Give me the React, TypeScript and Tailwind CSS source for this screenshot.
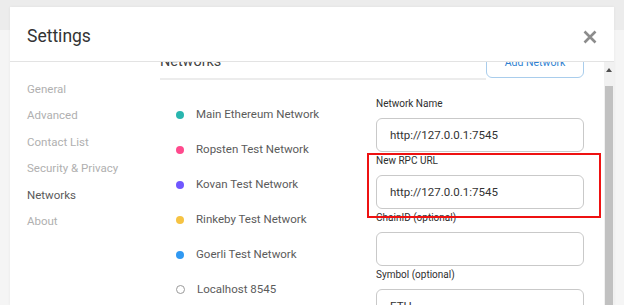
import { useState } from "react";

const networks = [
  { name: "Main Ethereum Network", dot: "bg-[#29b6af]" },
  { name: "Ropsten Test Network", dot: "bg-[#ff4a8d]" },
  { name: "Kovan Test Network", dot: "bg-[#7057ff]" },
  { name: "Rinkeby Test Network", dot: "bg-[#f6c343]" },
  { name: "Goerli Test Network", dot: "bg-[#3099f2]" },
  { name: "Localhost 8545", dot: "" },
];

const tabs = ["General", "Advanced", "Contact List", "Security & Privacy", "Networks", "About"];

function Field({ label, value }: { label: string; value: string }) {
  return (
    <div className="flex flex-col mb-[2px]">
      <label className="text-[10px] leading-[14px] text-[#2f2f2f] mb-[7px]">{label}</label>
      <input
        readOnly
        value={value}
        className="h-[34px] w-full border border-[#c9c9c9] rounded-[6px] px-[13px] text-[11.5px] text-[#333] bg-white outline-none"
      />
    </div>
  );
}

export default function App() {
  const [active] = useState("Networks");

  return (
    <div className="w-[624px] h-[305px] overflow-hidden bg-[linear-gradient(#ececec_0_30px,#f5f5f5_30px)] font-['Roboto',sans-serif]">
      <div className="ml-[10px] mt-[7px] w-[604px] h-[298px] bg-white flex flex-col shadow-[0_0_3px_rgba(0,0,0,0.06)]">
        {/* header */}
        <div className="h-[55px] shrink-0 flex items-center justify-between pl-[17px] pr-[17px] pt-[4px] border-b border-[#e3e3e3] relative z-10 bg-white">
          <h1 className="text-[17.5px] text-[#333]">Settings</h1>
          <svg width="14" height="14" viewBox="0 0 14 14" className="mt-[1px]">
            <path d="M1.5 1.5 L12.5 12.5 M12.5 1.5 L1.5 12.5" stroke="#8c8c8c" strokeWidth="2.6" strokeLinecap="butt" />
          </svg>
        </div>

        {/* body */}
        <div className="flex flex-1 min-h-0">
          {/* sidebar */}
          <div className="w-[150px] shrink-0 pl-[17px] pt-[14px]">
            {tabs.map((t) => (
              <div
                key={t}
                className={`text-[11.5px] leading-[26.4px] ${t === active ? "text-[#5a5a5a]" : "text-[#b0b0b0]"}`}
              >
                {t}
              </div>
            ))}
          </div>

          {/* main */}
          <div className="flex-1 min-w-0 overflow-hidden">
            <div className="-mt-[14px]">
              <div className="h-[32px] flex pr-[20px]">
                <div className="flex-1 flex items-end pb-[6px] border-b-2 border-[#ececec]">
                  <h2 className="text-[14.4px] leading-[20px] text-[#444]">Networks</h2>
                </div>
                <button className="h-[30px] w-[98px] border border-[#a9cdec] rounded-[6px] text-[10.5px] text-[#2f7fd0] bg-white">
                  Add Network
                </button>
              </div>

              <div className="flex pr-[20px]">
                <div className="w-[216px] shrink-0 pl-[16px] pt-[17px]">
                  {networks.map((n) => (
                    <div key={n.name} className="h-[35px] flex items-center">
                      {n.dot ? (
                        <span className={`w-[8px] h-[8px] rounded-full ${n.dot}`} />
                      ) : (
                        <span className="w-[9px] h-[9px] rounded-full border-[1.5px] border-[#9a9a9a]" />
                      )}
                      <span className="ml-[12px] text-[11.5px] text-[#5b5b5b]">{n.name}</span>
                    </div>
                  ))}
                </div>

                <div className="flex-1 pt-[17px] relative">
                  <Field label="Network Name" value="http://127.0.0.1:7545" />
                  <Field label="New RPC URL" value="http://127.0.0.1:7545" />
                  <Field label="ChainID (optional)" value="" />
                  <Field label="Symbol (optional)" value="ETH" />
                  <div className="absolute left-[-9px] top-[73px] w-[234px] h-[65px] border-2 border-[#ee1111] pointer-events-none" />
                </div>
              </div>
            </div>
          </div>

          {/* scrollbar */}
          <div className="w-[10px] shrink-0 bg-[#f1f1f1] flex flex-col">
            <div className="h-[24px] flex justify-center pt-[6px]">
              <svg width="6" height="4" viewBox="0 0 6 4">
                <path d="M0 4 L3 0 L6 4 Z" fill="#505050" />
              </svg>
            </div>
            <div className="flex-1 mx-[1px] bg-[#c1c1c1]" />
          </div>
        </div>
      </div>
    </div>
  );
}
